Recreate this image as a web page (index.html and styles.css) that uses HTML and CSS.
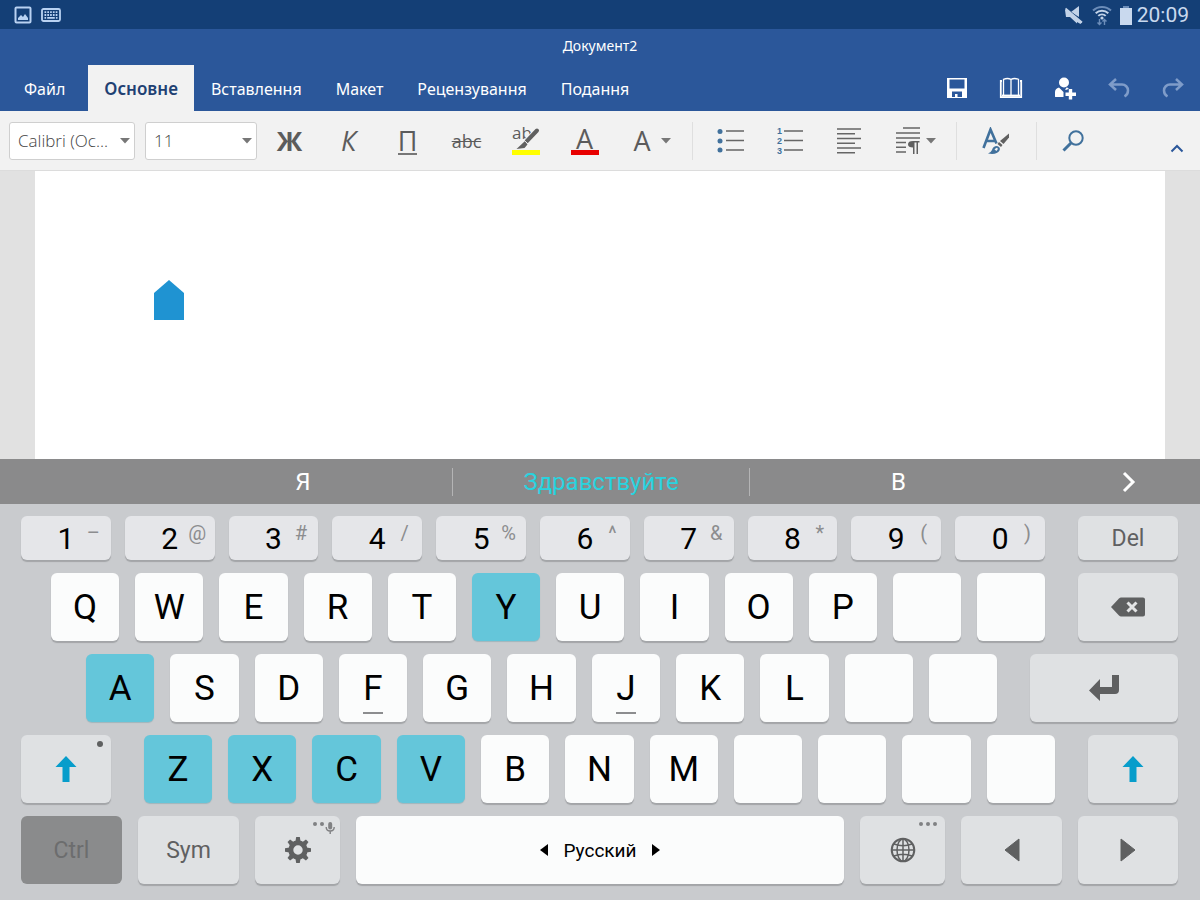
FILE: index.html
```html
<!DOCTYPE html>
<html lang="uk">
<head>
<meta charset="utf-8">
<meta name="viewport" content="width=device-width, initial-scale=1">
<title>Документ2</title>
<link rel="stylesheet" href="styles.css">
</head>
<body>
<div class="status">
  <div class="status-left">
    <svg width="18" height="18" viewBox="0 0 18 18"><rect x="1.5" y="1.5" width="15" height="15" rx="1" fill="none" stroke="#b9d2f2" stroke-width="2"/><path d="M4 14v-2l3-3 2 2 2-3 3 4v2z" fill="#b9d2f2"/></svg>
    <svg width="20" height="14" viewBox="0 0 20 14"><rect x="1" y="1" width="18" height="12" rx="1.5" fill="none" stroke="#b9d2f2" stroke-width="1.8"/><path d="M3.5 4.2h13M3.5 7h13" stroke="#b9d2f2" stroke-width="1.8" stroke-dasharray="1.7 1.1"/><path d="M3.5 9.9h1.6M6.2 9.9h7.6M14.9 9.9h1.6" stroke="#b9d2f2" stroke-width="1.8"/></svg>
  </div>
  <div class="status-right">
    <svg width="20" height="20" viewBox="0 0 20 20"><path d="M7 7L15 1v11z" fill="#c3d3e8"/><path d="M1 5h3l14 12-1.500 2-3.500-2v1.500L6 12H2z" fill="#c3d3e8"/><path d="M4 4.500l15 12.500" stroke="#143f76" stroke-width="1"/><path d="M1.500 3.500L18 17.500" stroke="#c3d3e8" stroke-width="1.800"/></svg>
    <svg width="20" height="22" viewBox="0 0 20 22" fill="none"><path d="M1 6.500a13 13 0 0 1 18 0" stroke="#6c8db9" stroke-width="2"/><path d="M3.700 9.200a9 9 0 0 1 12.600 0M6.300 11.900a5.300 5.300 0 0 1 7.400 0" stroke="#c3d3e8" stroke-width="2"/><circle cx="10" cy="14" r="1.600" fill="#c3d3e8"/><path d="M7.500 15v5.500M5.500 18.500l2 2 2-2M12.500 21v-5.500M10.500 17.500l2-2 2 2" stroke="#6c8db9" stroke-width="1.400"/></svg>
    <svg width="12" height="20" viewBox="0 0 12 20"><path d="M3 1h6v2H3z" fill="#6c8db9"/><path d="M0 3h12v17H0z" fill="#c9d9ee"/></svg>
    <time class="clock">20:09</time>
  </div>
</div>

<header class="header">
  <h1 class="title">Документ2</h1>
  <div class="ribbon">
    <nav class="tabs">
      <button class="tab tab-file">Файл</button>
      <button class="tab tab-active">Основне</button>
      <button class="tab">Вставлення</button>
      <button class="tab">Макет</button>
      <button class="tab">Рецензування</button>
      <button class="tab">Подання</button>
    </nav>
    <div class="actions">
      <button class="action" aria-label="Зберегти"><svg width="22" height="22" viewBox="0 0 22 22"><path fill-rule="evenodd" d="M1 1h20v20H1zM3.500 2.500v9h15v-9zM6 14.500V20h3v-3h2.500v3H16v-5.500z" fill="#fff"/></svg></button>
      <button class="action" aria-label="Читання"><svg width="24" height="22" viewBox="0 0 24 22" fill="none"><path d="M3 4H1.800v16.200h20.400V4H21" stroke="#fff" stroke-width="1.800"/><path d="M4.500 18.500V2.300Q8.500 .7 12 2.300Q15.500 .7 19.500 2.300V18.500M12 2.300V19" stroke="#fff" stroke-width="1.300"/><path d="M3 18.600h18" stroke="#fff" stroke-width="2"/></svg></button>
      <button class="action" aria-label="Спільний доступ"><svg width="22" height="24" viewBox="0 0 22 24"><circle cx="10" cy="6.500" r="5" fill="#fff"/><path d="M1 20.500V16q0-3.500 4-4.500l4.500 4.500V21H2q-1 0-1-.5zM12.500 11.500q1.500 0 2 .8v1.500H11z" fill="#fff"/><path d="M16.500 13v11M11 18.500h11" stroke="#2b579a" stroke-width="6"/><path d="M16.500 13v10.500M11.500 18.300H22" stroke="#fff" stroke-width="3.400"/></svg></button>
      <button class="action" aria-label="Скасувати"><svg width="22" height="20" viewBox="0 0 22 20" fill="none" stroke="#7f9cc9" stroke-width="2.500"><path d="M8 1L2 6.500L8 12M2.500 6.500H14a6 6 0 0 1 6 6q0 4-3.500 6"/></svg></button>
      <button class="action" aria-label="Повторити"><svg width="22" height="20" viewBox="0 0 22 20" fill="none" stroke="#7f9cc9" stroke-width="2.500"><path d="M14 1l6 5.500l-6 5.500M19.500 6.500H8a6 6 0 0 0-6 6q0 4 3.500 6"/></svg></button>
    </div>
  </div>
</header>

<div class="toolbar">
  <div class="picker picker-font">
    <select class="picker-select" aria-label="Шрифт"><option>Calibri (Ос...</option></select>
    <svg class="picker-caret" width="10" height="6" viewBox="0 0 10 6"><path d="M0 0h10L5 5.500z" fill="#777"/></svg>
  </div>
  <div class="picker picker-size">
    <select class="picker-select" aria-label="Розмір шрифту"><option>11</option></select>
    <svg class="picker-caret" width="10" height="6" viewBox="0 0 10 6"><path d="M0 0h10L5 5.500z" fill="#777"/></svg>
  </div>
  <div class="group">
    <button class="tool bold">Ж</button>
    <button class="tool italic">К</button>
    <button class="tool"><span class="underline">П</span></button>
    <button class="tool strike">abc</button>
    <button class="tool" aria-label="Колір виділення"><svg width="30" height="44" viewBox="0 -6 30 44"><text class="ab" x="1" y="14">ab</text><path d="M25.500 6L15 17" stroke="#f2f2f2" stroke-width="6"/><path d="M26 5.500L15.500 16.500" stroke="#606060" stroke-width="4" stroke-linecap="round"/><path d="M13.500 16.500l3 3-3 3.500-8 1z" fill="#606060"/><path d="M12.500 14.800l5.500 5" stroke="#f2f2f2" stroke-width="1"/><path d="M1 25h28v5H1z" fill="#ff0"/></svg></button>
    <button class="tool"><span class="font-color">A</span></button>
    <button class="tool tool-wide">A<svg width="10" height="6" viewBox="0 0 10 6"><path d="M0 0h10L5 5.500z" fill="#777"/></svg></button>
  </div>
  <div class="group">
    <button class="tool" aria-label="Маркери"><svg width="28" height="26" viewBox="0 0 28 26"><g fill="#41719c"><circle cx="3" cy="3.500" r="2.500"/><circle cx="3" cy="13" r="2.500"/><circle cx="3" cy="22" r="2.500"/></g><path d="M9 3h18M9 12.500h18M9 22h18" stroke="#666" stroke-width="1.400"/></svg></button>
    <button class="tool" aria-label="Нумерація"><svg width="28" height="36" viewBox="0 -4 28 36"><g class="nums"><text x="1" y="7">1</text><text x="1" y="17">2</text><text x="1" y="27">3</text></g><path d="M8 4h19M8 13.500h19M8 23h19" stroke="#666" stroke-width="1.400"/></svg></button>
    <button class="tool" aria-label="Вирівнювання"><svg width="24" height="26" viewBox="0 0 24 26"><path d="M0 1h24M0 5.700h18M0 10.500h24M0 15.300h18M0 20h24M0 24.800h18" stroke="#666" stroke-width="1.400"/></svg></button>
    <button class="tool tool-wide" aria-label="Абзац"><svg width="24" height="28" viewBox="0 0 24 28"><path d="M7 1h17M0 6h24M0 11h24M0 15.500h10M0 20.200h10M0 25h10" stroke="#666" stroke-width="1.400"/><path d="M17 14h6.500v1.500h-1.500V27h-1.500V15.500h-2V27H17v-6.500q-5 0-5-3.200T17 14z" fill="#606060"/></svg><svg width="10" height="6" viewBox="0 0 10 6"><path d="M0 0h10L5 5.500z" fill="#777"/></svg></button>
  </div>
  <div class="group group-styles">
    <button class="tool tool-wide" aria-label="Стилі"><svg width="28" height="28" viewBox="0 0 28 28"><path d="M1.500 21L8.500 2.500L14.500 16.500M4.500 14h9" fill="none" stroke="#41719c" stroke-width="2.600"/><path d="M27 6.500v4l-5.500 6.500-3.500-3z" fill="#606060"/><path d="M17 15l3.500 3-1.500 2-3.500-3z" fill="#606060"/><path d="M6 26.500q3-1 4-3.500q1-4 5-4q4 1 2.500 4.500Q15 28 6 26.500z" fill="#41719c"/><path d="M12.500 22.500q2-2.500 3-1.500t-1 3z" fill="#f2f2f2"/></svg></button>
  </div>
  <div class="group group-last">
    <button class="tool" aria-label="Пошук"><svg width="22" height="22" viewBox="0 0 22 22" fill="none" stroke="#41719c"><circle cx="14" cy="8" r="6.700" stroke-width="2"/><path d="M9 13L1.500 20.500" stroke-width="3"/></svg></button>
    <button class="collapse" aria-label="Згорнути стрічку"><svg width="14" height="9" viewBox="0 0 14 9" fill="none" stroke="#2b579a" stroke-width="2"><path d="M1.500 7.500L7 2l5.500 5.500"/></svg></button>
  </div>
</div>

<main class="workspace">
  <div class="page">
    <svg width="32" height="42" viewBox="0 0 32 42"><path d="M1 14L16 1l15 13v27H1z" fill="#1f93d2"/></svg>
  </div>
</main>

<div class="suggestions">
  <button class="word word-first">Я</button>
  <button class="word word-best">Здравствуйте</button>
  <button class="word">В</button>
  <button class="word-more" aria-label="Більше"><svg width="14" height="22" viewBox="0 0 14 22" fill="none" stroke="#fff" stroke-width="3"><path d="M2 2l9 9-9 9"/></svg></button>
</div>

<div class="keyboard">
  <div class="row row-digits">
    <div class="keys keys-digits">
      <button class="key digit"><span>1</span><small>–</small></button>
      <button class="key digit"><span>2</span><small>@</small></button>
      <button class="key digit"><span>3</span><small>#</small></button>
      <button class="key digit"><span>4</span><small>/</small></button>
      <button class="key digit"><span>5</span><small>%</small></button>
      <button class="key digit"><span>6</span><small>^</small></button>
      <button class="key digit"><span>7</span><small>&amp;</small></button>
      <button class="key digit"><span>8</span><small>*</small></button>
      <button class="key digit"><span>9</span><small>(</small></button>
      <button class="key digit"><span>0</span><small>)</small></button>
    </div>
    <button class="key fn fn-100">Del</button>
  </div>
  <div class="row row-q">
    <div class="keys keys-12">
      <button class="key">Q</button><button class="key">W</button><button class="key">E</button><button class="key">R</button><button class="key">T</button><button class="key lit">Y</button><button class="key">U</button><button class="key">I</button><button class="key">O</button><button class="key">P</button><button class="key" aria-label="Х"></button><button class="key" aria-label="Ъ"></button>
    </div>
    <button class="key fn fn-100" aria-label="Backspace"><svg width="36" height="20" viewBox="0 0 36 20"><path d="M1 10L9 1.500Q10 .5 11 .5h22q2 0 2 2v15q0 2-2 2H11q-1 0-2-1z" fill="#5f6061"/><path d="M17.500 5.500l9 9M26.500 5.500l-9 9" stroke="#e4e5e6" stroke-width="3"/></svg></button>
  </div>
  <div class="row row-a">
    <div class="keys keys-11">
      <button class="key lit">A</button><button class="key">S</button><button class="key">D</button><button class="key home">F</button><button class="key">G</button><button class="key">H</button><button class="key home">J</button><button class="key">K</button><button class="key">L</button><button class="key" aria-label="Ж"></button><button class="key" aria-label="Э"></button>
    </div>
    <button class="key fn fn-148" aria-label="Enter"><svg width="32" height="28" viewBox="0 0 32 28"><path d="M24 1h7v15q0 4-4 4H12v7L1 16.500L12 5v8h12z" fill="#5f6061"/></svg></button>
  </div>
  <div class="row">
    <button class="key fn fn-90 shift" aria-label="Shift"><svg width="22" height="28" viewBox="0 0 22 28"><path d="M11 1l10.500 11H14.500v15h-7V12H.5z" fill="#079dcb"/></svg><i class="dot"></i></button>
    <div class="keys keys-11">
      <button class="key lit">Z</button><button class="key lit">X</button><button class="key lit">C</button><button class="key lit">V</button><button class="key">B</button><button class="key">N</button><button class="key">M</button><button class="key" aria-label="Ь"></button><button class="key" aria-label="Б"></button><button class="key" aria-label="Ю"></button><button class="key" aria-label="Ё"></button>
    </div>
    <button class="key fn fn-90" aria-label="Shift"><svg width="22" height="28" viewBox="0 0 22 28"><path d="M11 1l10.500 11H14.500v15h-7V12H.5z" fill="#079dcb"/></svg></button>
  </div>
  <div class="row row-space">
    <button class="key fn fn-101 ctrl">Ctrl</button>
    <button class="key fn fn-101">Sym</button>
    <button class="key fn fn-85" aria-label="Налаштування"><svg width="28" height="28" viewBox="-14 -14 28 28"><circle r="7.200" fill="none" stroke="#5f6061" stroke-width="5"/><g fill="#5f6061"><path id="tooth" d="M-2.600-8.500L-1.800-13H1.800L2.600-8.500z"/><use href="#tooth" transform="rotate(45)"/><use href="#tooth" transform="rotate(90)"/><use href="#tooth" transform="rotate(135)"/><use href="#tooth" transform="rotate(180)"/><use href="#tooth" transform="rotate(225)"/><use href="#tooth" transform="rotate(270)"/><use href="#tooth" transform="rotate(315)"/></g></svg><svg class="corner corner-mic" width="24" height="14" viewBox="0 0 24 14"><g fill="#808183"><circle cx="3" cy="3" r="2"/><circle cx="10" cy="3" r="2"/><rect x="16.200" y="1" width="4" height="7.500" rx="2"/></g><path d="M14.200 6q0 4 4 4t4-4M18.200 10v3" fill="none" stroke="#808183" stroke-width="1.400"/></svg></button>
    <button class="key space"><svg width="8" height="14" viewBox="0 0 8 14"><path d="M8 1v12L0 7z"/></svg>Русский<svg width="8" height="14" viewBox="0 0 8 14"><path d="M0 1v12l8-6z"/></svg></button>
    <button class="key fn fn-85" aria-label="Мова"><svg width="26" height="26" viewBox="0 0 26 26" fill="none" stroke="#5f6061" stroke-width="1.500"><circle cx="13" cy="13" r="11.300" stroke-width="2"/><ellipse cx="13" cy="13" rx="6" ry="11"/><path d="M13 2v22M2 13h22M4 7q9 3.500 18 0M4 19q9-3.500 18 0"/></svg><svg class="corner corner-dots" width="20" height="6" viewBox="0 0 20 6" fill="#808183"><circle cx="3" cy="3" r="2"/><circle cx="10" cy="3" r="2"/><circle cx="17" cy="3" r="2"/></svg></button>
    <button class="key fn fn-101" aria-label="Ліворуч"><svg width="16" height="24" viewBox="0 0 16 24"><path d="M1 12L15 1v22z" fill="#5f6061" stroke="#5f6061" stroke-linejoin="round"/></svg></button>
    <button class="key fn fn-100" aria-label="Праворуч"><svg width="16" height="24" viewBox="0 0 16 24"><path d="M15 12L1 1v22z" fill="#5f6061" stroke="#5f6061" stroke-linejoin="round"/></svg></button>
  </div>
</div>
</body>
</html>
```
FILE: styles.css
```css
* {
  box-sizing: border-box;
}

body {
  margin: 0;
  min-height: 100vh;
  display: flex;
  flex-direction: column;
  font-family: "Noto Sans", "Open Sans", sans-serif;
  background: #e1e1e1;
}

button {
  margin: 0;
  padding: 0;
  border: 0;
  background: none;
  color: inherit;
  font: inherit;
}

svg {
  display: block;
  flex: none;
}

/* Status bar */
.status {
  display: flex;
  justify-content: space-between;
  align-items: center;
  height: 29px;
  padding: 0 11px 0 14px;
  background: #143f76;
}

.status-left,
.status-right {
  display: flex;
  align-items: center;
}

.status-left {
  gap: 9px;
}

.status-right {
  gap: 8px;
}

.clock {
  margin-left: -3px;
  padding-top: 2px;
  color: #c9d9ee;
  font: 21px/29px Roboto, sans-serif;
}

/* Header */
.header {
  background: #2b579a;
  color: #fff;
}

.title {
  margin: 0;
  height: 36px;
  font-size: 14px;
  font-weight: 400;
  line-height: 33px;
  text-align: center;
}

.ribbon {
  display: flex;
  justify-content: space-between;
}

.tabs {
  display: flex;
}

.tab {
  height: 46px;
  padding: 0 17px;
  font-size: 16px;
  line-height: 48px;
}

.tab-file {
  padding: 0 23px 0 24px;
}

.tab-active {
  padding: 0 16px;
  background: #f2f2f2;
  color: #1f4173;
  font-size: 17px;
  font-weight: 600;
}

.actions {
  display: flex;
}

.action {
  display: flex;
  align-items: center;
  justify-content: center;
  width: 54px;
  height: 46px;
}

/* Toolbar */
.toolbar {
  display: flex;
  align-items: center;
  height: 60px;
  padding-left: 9px;
  background: #f2f2f2;
  border-bottom: 1px solid #dcdcdc;
  color: #5c5c5c;
}

.picker {
  position: relative;
  height: 38px;
  margin-right: 10px;
}

.picker-font {
  width: 126px;
}

.picker-size {
  width: 112px;
  margin-right: 3px;
}

.picker-select {
  appearance: none;
  width: 100%;
  height: 100%;
  padding: 0 8px;
  border: 1px solid #cfcfcf;
  border-radius: 3px;
  background: #fff;
  color: #444;
  font: 300 17px "Open Sans", sans-serif;
}

.picker-caret {
  position: absolute;
  right: 5px;
  top: 16px;
  pointer-events: none;
}

.group {
  display: flex;
  align-items: center;
  height: 38px;
  padding-right: 2px;
  border-right: 1px solid #dfdfdf;
}

.group + .group {
  padding-left: 8px;
}

.group + .group-styles {
  padding-left: 1px;
}

.group + .group-last {
  flex: 1;
  padding-left: 6px;
  padding-right: 0;
  border-right: 0;
}

.tool {
  display: flex;
  align-items: center;
  justify-content: center;
  width: 59px;
  height: 38px;
  font: 400 27px/32px "Open Sans", sans-serif;
}

.tool-wide {
  width: 76px;
  gap: 10px;
}

.tool-wide svg + svg {
  margin-left: -4px;
}

.bold {
  font-weight: 700;
}

.italic {
  font-style: italic;
}

.underline {
  height: 28px;
  border-bottom: 2px solid #777;
  line-height: 27px;
}

.strike {
  font-size: 18px;
  text-decoration: line-through;
}

.font-color {
  width: 28px;
  height: 29px;
  border-bottom: 5px solid #e80000;
  line-height: 26px;
}

.ab {
  font: 17px "Open Sans", sans-serif;
  fill: #5c5c5c;
}

.nums {
  font: 700 9px "Liberation Sans", sans-serif;
  fill: #41719c;
}

.collapse {
  margin: 16px 16px 0 auto;
}

/* Document */
.workspace {
  flex: 1;
  display: flex;
  padding: 0 35px;
}

.page {
  flex: 1;
  padding: 108px 118px;
  background: #fff;
}

/* Suggestions */
.suggestions {
  display: grid;
  grid-template-columns: 453fr 297fr 297fr 153fr;
  align-items: center;
  height: 45px;
  background: #8a8a8b;
  color: #fff;
  font: 24px Roboto, sans-serif;
}

.word {
  height: 28px;
  border-right: 1px solid #b4b4b5;
}

.word-first {
  padding-left: 34%;
}

.word-best {
  color: #29d3df;
}

.word:nth-child(3) {
  border-right: 0;
}

.word-more {
  display: flex;
  justify-content: center;
  padding-left: 10px;
}

/* Keyboard */
.keyboard {
  display: flex;
  flex-direction: column;
  gap: 13px;
  padding: 12px 22px 16px 21px;
  background: #c9cbce;
  font-family: Roboto, sans-serif;
}

.row {
  display: flex;
  gap: 33px;
  height: 68px;
}

.row-digits {
  height: 44px;
}

.row-q {
  padding-left: 30px;
}

.row-a {
  padding-left: 65px;
}

.row-space {
  gap: 16px;
}

.keys {
  display: flex;
  gap: 16px;
}

.keys-digits {
  flex: 1024 1 0;
  gap: 14px;
}

.keys-12 {
  flex: 996 1 0;
}

.keys-11 {
  flex: 912 1 0;
}

.key {
  position: relative;
  flex: 1 1 0;
  display: flex;
  align-items: center;
  justify-content: center;
  border-radius: 6px;
  background: #fbfcfc;
  box-shadow: 0 2px 1px #a3a5a8;
  color: #000;
  font-size: 35px;
}

.digit {
  display: grid;
  grid-template-columns: 1fr 20px 1fr;
  background: #e5e6e9;
  font-size: 30px;
}

.digit span {
  grid-column: 2;
}

.digit small {
  padding-bottom: 10px;
  color: #8c8d8f;
  font-size: 20px;
}

.lit {
  background: #64c6da;
  box-shadow: 0 1px 1px #9fb6bd;
}

.home::after {
  content: "";
  position: absolute;
  bottom: 8px;
  width: 20px;
  height: 2px;
  background: #8c8d8f;
}

.fn {
  background: #dfe1e3;
  color: #5f6061;
  font-size: 23px;
}

.fn-85 {
  flex: 85 1 0;
}

.fn-90 {
  flex: 90 1 0;
}

.fn-100 {
  flex: 100 1 0;
}

.fn-101 {
  flex: 101 1 0;
}

.fn-148 {
  flex: 148 1 0;
}

.ctrl {
  background: #8a8b8c;
  box-shadow: none;
  color: #6c6d6e;
}

.space {
  flex: 488 1 0;
  gap: 15px;
  font-size: 19px;
}

.dot {
  position: absolute;
  top: 6px;
  right: 8px;
  width: 6px;
  height: 6px;
  border-radius: 50%;
  background: #5f6061;
}

.corner {
  position: absolute;
  top: 5px;
}

.corner-mic {
  right: 4px;
}

.corner-dots {
  right: 7px;
}
```
